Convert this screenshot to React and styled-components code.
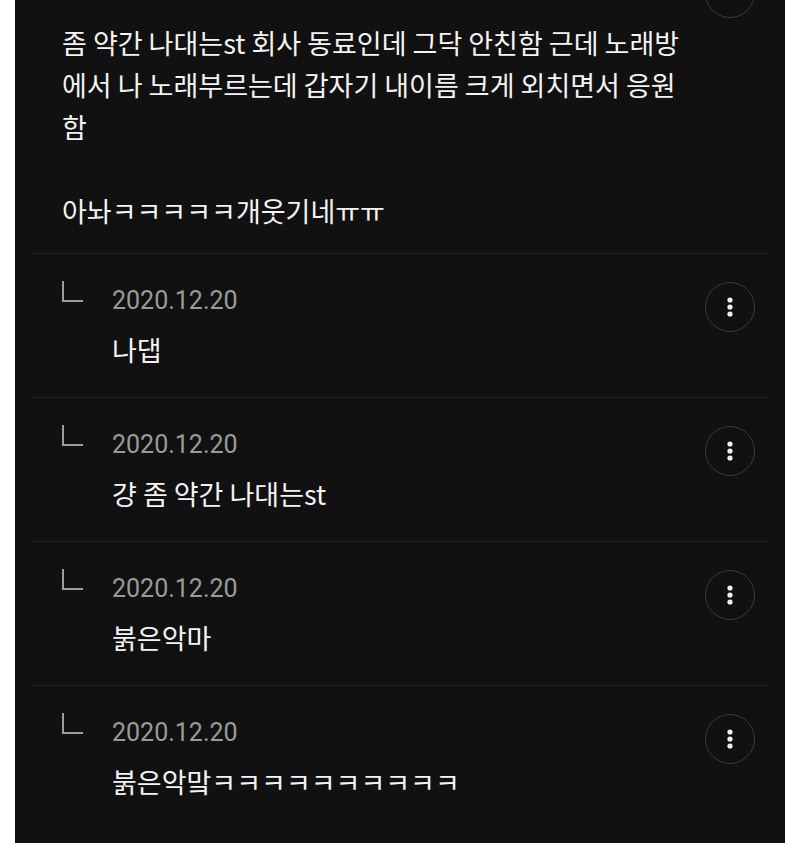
import { createGlobalStyle, styled } from "styled-components"

const replies = [
  { date: "2020.12.20", text: "나댑" },
  { date: "2020.12.20", text: "걍 좀 약간 나대는st" },
  { date: "2020.12.20", text: "붉은악마" },
  { date: "2020.12.20", text: "붉은악맠ㅋㅋㅋㅋㅋㅋㅋㅋㅋㅋ" },
]

const MoreButton = ({ bare }) => (
  <CircleButton>
    {!bare && (
      <svg width="8" height="24" viewBox="0 0 8 24">
        <circle cx="4" cy="5" r="2.6" fill="#f2f2f2" />
        <circle cx="4" cy="12" r="2.6" fill="#f2f2f2" />
        <circle cx="4" cy="19" r="2.6" fill="#f2f2f2" />
      </svg>
    )}
  </CircleButton>
)

const App = () => {
  return (
    <>
      <GlobalStyle />
      <Panel>
        <MainComment>
          <HeadRow>
            <MoreButton bare />
          </HeadRow>
          <Body>
            {"좀 약간 나대는st 회사 동료인데 그닥 안친함 근데 노래방\n에서 나 노래부르는데 갑자기 내이름 크게 외치면서 응원\n함\n\n아놔ㅋㅋㅋㅋㅋ개웃기네ㅠㅠ"}
          </Body>
        </MainComment>
        {replies.map((r, i) => (
          <Reply key={i}>
            <Corner />
            <Content>
              <DateText>{r.date}</DateText>
              <ReplyText>{r.text}</ReplyText>
            </Content>
            <MoreButton />
          </Reply>
        ))}
      </Panel>
    </>
  )
}

export default App

const GlobalStyle = createGlobalStyle`
body{
  margin:0;
  background:#ffffff;
  font-family:"Noto Sans CJK KR","Noto Sans",sans-serif;
}
`

const Panel = styled.div`
margin:0 15px;
min-height:100vh;
background:#111111;
overflow:hidden;
`

const MainComment = styled.div`
display:flex;
flex-direction:column;
margin:0 15px;
padding:0 15px 21px 32px;
border-bottom:1px solid #1f1f1f;
`

const HeadRow = styled.div`
display:flex;
justify-content:flex-end;
margin-top:-30px;
margin-bottom:4px;
`

const Body = styled.div`
white-space:pre-line;
color:#f4f4f4;
font-size:27px;
line-height:42px;
`

const Reply = styled.div`
display:grid;
grid-template-columns:50px 1fr 50px;
align-items:start;
margin:0 15px;
padding:30px 15px 29px 32px;
border-bottom:1px solid #1f1f1f;
&:last-child{
  border-bottom:none;
}
`

const Corner = styled.div`
width:21px;
height:21px;
margin-top:-3px;
border-left:2px solid #9c9c9c;
border-bottom:2px solid #9c9c9c;
box-sizing:border-box;
`

const Content = styled.div`
display:flex;
flex-direction:column;
padding-top:2px;
`

const DateText = styled.div`
font-family:Roboto,"Noto Sans",sans-serif;
font-size:25px;
line-height:30px;
color:#9a9a9a;
`

const ReplyText = styled.div`
margin-top:16px;
font-size:27px;
line-height:36px;
color:#f4f4f4;
`

const CircleButton = styled.div`
width:50px;
height:50px;
margin-top:-2px;
box-sizing:border-box;
border:1.5px solid #3c3c3c;
border-radius:50%;
display:flex;
align-items:center;
justify-content:center;
`
